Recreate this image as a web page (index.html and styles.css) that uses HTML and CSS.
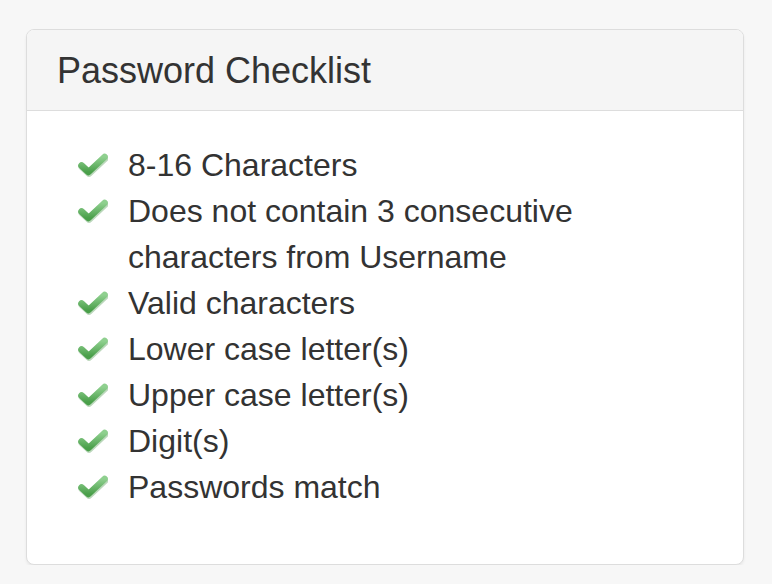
FILE: index.html
```html
<!DOCTYPE html>
<html lang="en">
<head>
<meta charset="utf-8">
<title>Password Checklist</title>
<link rel="stylesheet" href="styles.css">
</head>
<body>
<div class="panel">
  <div class="panel-heading">Password Checklist</div>
  <div class="panel-body">
    <ul class="checklist">
      <li><svg class="check" viewBox="0 0 30 26"><use href="#ck"/></svg><span>8-16 Characters</span></li>
      <li><svg class="check" viewBox="0 0 30 26"><use href="#ck"/></svg><span>Does not contain 3 consecutive characters from Username</span></li>
      <li><svg class="check" viewBox="0 0 30 26"><use href="#ck"/></svg><span>Valid characters</span></li>
      <li><svg class="check" viewBox="0 0 30 26"><use href="#ck"/></svg><span>Lower case letter(s)</span></li>
      <li><svg class="check" viewBox="0 0 30 26"><use href="#ck"/></svg><span>Upper case letter(s)</span></li>
      <li><svg class="check" viewBox="0 0 30 26"><use href="#ck"/></svg><span>Digit(s)</span></li>
      <li><svg class="check" viewBox="0 0 30 26"><use href="#ck"/></svg><span>Passwords match</span></li>
    </ul>
  </div>
</div>
<svg class="defs" width="0" height="0">
  <defs>
    <linearGradient id="g" x1="0" y1="0" x2="0" y2="1">
      <stop offset="0" stop-color="#8fd08f"/>
      <stop offset="1" stop-color="#4a9f4a"/>
    </linearGradient>
    <g id="ck">
      <polyline points="3.5,13.5 10.5,20 26.5,5" fill="none" stroke="#3f8f3f" stroke-opacity="0.35" stroke-width="7.5" stroke-linejoin="round" stroke-linecap="round" transform="translate(0.5,1)"/>
      <polyline points="3.5,13.5 10.5,20 26.5,5" fill="none" stroke="url(#g)" stroke-width="6.5" stroke-linejoin="round" stroke-linecap="round"/>
    </g>
  </defs>
</svg>
</body>
</html>
```

FILE: styles.css
```css
html, body {
  margin: 0;
  padding: 0;
}
body {
  background: #f7f7f7;
  font-family: "Liberation Sans", Arial, Helvetica, sans-serif;
  color: #333333;
  padding: 29px 28px 0 26px;
}
.panel {
  width: 718px;
  background: #ffffff;
  border: 1px solid #dddddd;
  border-radius: 8px;
  box-shadow: 0 2px 3px rgba(0, 0, 0, 0.06);
  box-sizing: border-box;
  overflow: hidden;
}
.panel-heading {
  background: #f5f5f5;
  border-bottom: 1px solid #dddddd;
  padding: 21px 30px 19px 30px;
  font-size: 36px;
  line-height: 40px;
  color: #333333;
}
.panel-body {
  padding: 31px 30px 54px 30px;
}
.checklist {
  list-style: none;
  margin: 0;
  padding: 0 0 0 21px;
  font-size: 32px;
  line-height: 46px;
}
.checklist li {
  display: flex;
  align-items: flex-start;
}
.check {
  flex: none;
  width: 30px;
  height: 26px;
  margin: 10px 20px 0 0;
}
.checklist span {
  flex: 1;
}
.defs {
  position: absolute;
  width: 0;
  height: 0;
}
```
